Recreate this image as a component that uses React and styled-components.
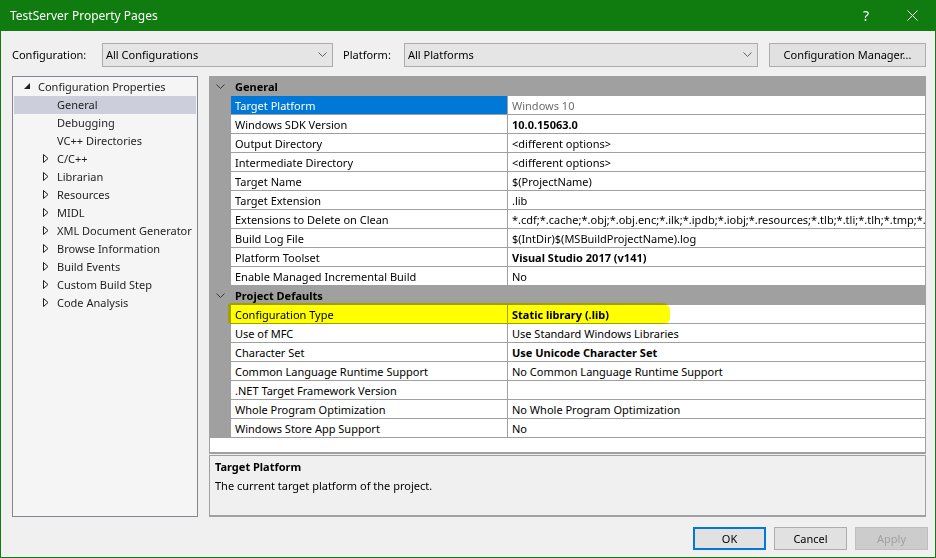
import React from "react";
import styled, { createGlobalStyle } from "styled-components";

const GlobalStyle = createGlobalStyle`
    html, body {
        margin: 0;
        padding: 0;
        background-color: #F0F0F0;
    }
    body {
        font-family: "Noto Sans", "Liberation Sans", sans-serif;
        font-size: 11px;
        color: #000;
    }
`;

const Window = styled.div`
    width: 936px;
    height: 558px;
    box-sizing: border-box;
    border: 1px solid #107C10;
    border-top: none;
    background-color: #F0F0F0;
    display: flex;
    flex-direction: column;
    overflow: hidden;
`;

const TitleBar = styled.div`
    height: 31px;
    flex: none;
    background-color: #107C10;
    color: #fff;
    display: flex;
    align-items: center;
    padding-left: 9px;
    font-size: 12px;
`;

const TitleText = styled.div`
    flex: 1;
`;

const TitleButton = styled.div`
    width: 46px;
    height: 31px;
    display: flex;
    align-items: center;
    justify-content: center;
    font-size: 14px;
`;

const Body = styled.div`
    flex: 1;
    display: flex;
    flex-direction: column;
    padding: 0 7px 0 11px;
`;

const Toolbar = styled.div`
    display: flex;
    align-items: center;
    height: 24px;
    margin-top: 12px;
    margin-right: 2px;
    line-height: 14px;
`;

const FieldLabel = styled.label`
    width: ${(p) => p.$width}px;
    flex: none;
    padding-bottom: 1px;
`;

const Combo = styled.div`
    width: ${(p) => p.$width}px;
    height: 24px;
    box-sizing: border-box;
    flex: none;
    background-color: #E5E5E5;
    border: 1px solid #ACACAC;
    display: flex;
    align-items: center;
    padding: 0 5px 1px 3px;
    margin-right: ${(p) => p.$gap || 0}px;
`;

const ComboText = styled.span`
    flex: 1;
`;

const Button = styled.button`
    width: ${(p) => p.$width || 73}px;
    height: ${(p) => p.$height || 23}px;
    box-sizing: border-box;
    font-family: inherit;
    font-size: 11px;
    padding: 0 0 1px;
    background-color: ${(p) => (p.$disabled ? "#CCCCCC" : "#E1E1E1")};
    color: ${(p) => (p.$disabled ? "#A0A0A0" : "#000")};
    border: ${(p) =>
        p.$default ? "2px solid #0078D7" : p.$disabled ? "1px solid #BFBFBF" : "1px solid #ADADAD"};
`;

const Main = styled.div`
    display: flex;
    gap: 11px;
    margin-top: 9px;
    margin-right: 2px;
    height: 441px;
`;

const Tree = styled.div`
    width: 186px;
    flex: none;
    box-sizing: border-box;
    border: 1px solid #828790;
    background-color: #F5F5F5;
    padding: 1px;
`;

const TreeRow = styled.div`
    height: 18px;
    display: flex;
    align-items: center;
    padding-left: ${(p) => p.$indent}px;
    padding-bottom: 1px;
    box-sizing: border-box;
    background-color: ${(p) => (p.$selected ? "#CCCEDB" : "transparent")};
    color: #1E1E1E;
    white-space: nowrap;
`;

const Expander = styled.span`
    width: 18px;
    flex: none;
    display: flex;
    align-items: center;
    padding-left: 4px;
    box-sizing: border-box;
`;

const RightColumn = styled.div`
    flex: 1;
    display: flex;
    flex-direction: column;
    gap: 1px;
    min-width: 0;
`;

const Grid = styled.div`
    height: 378px;
    box-sizing: border-box;
    border: 1px solid #A0A0A0;
    border-bottom-width: 2px;
    background-color: #FFFFFF;
    overflow: hidden;
`;

const GridRow = styled.div`
    position: relative;
    display: flex;
    height: 19px;
    background-color: #A0A0A0;
`;

const Gutter = styled.div`
    width: 21px;
    flex: none;
    display: flex;
    align-items: center;
    justify-content: center;
`;

const CategoryTitle = styled.div`
    flex: 1;
    font-weight: bold;
    padding-left: 4px;
    height: 18px;
    display: flex;
    align-items: center;
`;

const NameCell = styled.div`
    width: 276px;
    flex: none;
    height: 18px;
    box-sizing: border-box;
    display: flex;
    align-items: center;
    padding-left: 4px;
    background-color: ${(p) => (p.$selected ? "#0078D7" : "#FFFFFF")};
    color: ${(p) => (p.$selected ? "#FFFFFF" : "#000")};
    margin-right: 1px;
    white-space: nowrap;
`;

const ValueCell = styled.div`
    flex: 1;
    min-width: 0;
    height: 18px;
    display: flex;
    align-items: center;
    padding-left: 4px;
    background-color: #FFFFFF;
    font-weight: ${(p) => (p.$bold ? "bold" : "normal")};
    color: ${(p) => (p.$readonly ? "#6D6D6D" : "#000")};
    white-space: nowrap;
    overflow: hidden;
`;

/* marker stroke drawn over the "Configuration Type" row */
const Highlight = styled.div`
    position: absolute;
    left: 18px;
    top: -2px;
    width: 442px;
    height: 21px;
    background-color: #FFFF00;
    mix-blend-mode: multiply;
    border-radius: 3px 8px 6px 3px;
    pointer-events: none;
`;

const Description = styled.div`
    flex: 1;
    box-sizing: border-box;
    border: 1px solid #A0A0A0;
    border-bottom-width: 2px;
    padding: 1px 5px;
    line-height: 19px;
`;

const DescTitle = styled.div`
    font-weight: bold;
`;

const Footer = styled.div`
    display: flex;
    justify-content: flex-end;
    gap: 8px;
    margin-top: 10px;
`;

const Chevron = ({ color = "#606060" }) => (
    <svg width="9" height="6" viewBox="0 0 9 6">
        <polyline points="0.5,0.5 4.5,4.5 8.5,0.5" fill="none" stroke={color} strokeWidth="1" />
    </svg>
);

const OpenTriangle = () => (
    <svg width="7" height="7" viewBox="0 0 7 7">
        <polygon points="6,0 6,6 0,6" fill="#1E1E1E" />
    </svg>
);

const ClosedTriangle = () => (
    <svg width="6" height="9" viewBox="0 0 6 9">
        <polygon points="0.5,0.5 5,4.5 0.5,8.5" fill="none" stroke="#1E1E1E" strokeWidth="1" />
    </svg>
);

const treeItems = [
    { label: "Configuration Properties", indent: 6, open: true },
    { label: "General", indent: 25, leaf: true, selected: true },
    { label: "Debugging", indent: 25, leaf: true },
    { label: "VC++ Directories", indent: 25, leaf: true },
    { label: "C/C++", indent: 25 },
    { label: "Librarian", indent: 25 },
    { label: "Resources", indent: 25 },
    { label: "MIDL", indent: 25 },
    { label: "XML Document Generator", indent: 25 },
    { label: "Browse Information", indent: 25 },
    { label: "Build Events", indent: 25 },
    { label: "Custom Build Step", indent: 25 },
    { label: "Code Analysis", indent: 25 },
];

const categories = [
    {
        name: "General",
        rows: [
            { name: "Target Platform", value: "Windows 10", selected: true, readonly: true },
            { name: "Windows SDK Version", value: "10.0.15063.0", bold: true },
            { name: "Output Directory", value: "<different options>" },
            { name: "Intermediate Directory", value: "<different options>" },
            { name: "Target Name", value: "$(ProjectName)" },
            { name: "Target Extension", value: ".lib" },
            {
                name: "Extensions to Delete on Clean",
                value: "*.cdf;*.cache;*.obj;*.obj.enc;*.ilk;*.ipdb;*.iobj;*.resources;*.tlb;*.tli;*.tlh;*.tmp;*.rsp;*.pgc;*.pgd;*.meta",
            },
            { name: "Build Log File", value: "$(IntDir)$(MSBuildProjectName).log" },
            { name: "Platform Toolset", value: "Visual Studio 2017 (v141)", bold: true },
            { name: "Enable Managed Incremental Build", value: "No" },
        ],
    },
    {
        name: "Project Defaults",
        rows: [
            { name: "Configuration Type", value: "Static library (.lib)", bold: true, marked: true },
            { name: "Use of MFC", value: "Use Standard Windows Libraries" },
            { name: "Character Set", value: "Use Unicode Character Set", bold: true },
            { name: "Common Language Runtime Support", value: "No Common Language Runtime Support" },
            { name: ".NET Target Framework Version", value: "" },
            { name: "Whole Program Optimization", value: "No Whole Program Optimization" },
            { name: "Windows Store App Support", value: "No" },
        ],
    },
];

export default function App() {
    return (
        <>
            <GlobalStyle />
            <Window>
                <TitleBar>
                    <TitleText>TestServer Property Pages</TitleText>
                    <TitleButton>?</TitleButton>
                    <TitleButton>
                        <svg width="11" height="11" viewBox="0 0 11 11">
                            <path d="M0.5 0.5 L10.5 10.5 M10.5 0.5 L0.5 10.5" stroke="#fff" strokeWidth="1" />
                        </svg>
                    </TitleButton>
                </TitleBar>
                <Body>
                    <Toolbar>
                        <FieldLabel $width={90}>Configuration:</FieldLabel>
                        <Combo $width={231} $gap={10}>
                            <ComboText>All Configurations</ComboText>
                            <Chevron />
                        </Combo>
                        <FieldLabel $width={61}>Platform:</FieldLabel>
                        <Combo $width={354} $gap={11}>
                            <ComboText>All Platforms</ComboText>
                            <Chevron />
                        </Combo>
                        <Button $width={157} $height={24}>Configuration Manager...</Button>
                    </Toolbar>
                    <Main>
                        <Tree>
                            {treeItems.map((item) => (
                                <TreeRow key={item.label} $indent={item.indent} $selected={item.selected}>
                                    <Expander>
                                        {item.open ? <OpenTriangle /> : item.leaf ? null : <ClosedTriangle />}
                                    </Expander>
                                    {item.label}
                                </TreeRow>
                            ))}
                        </Tree>
                        <RightColumn>
                            <Grid>
                                {categories.map((cat) => (
                                    <React.Fragment key={cat.name}>
                                        <GridRow>
                                            <Gutter>
                                                <Chevron color="#3A3A3A" />
                                            </Gutter>
                                            <CategoryTitle>{cat.name}</CategoryTitle>
                                        </GridRow>
                                        {cat.rows.map((row) => (
                                            <GridRow key={row.name}>
                                                <Gutter />
                                                <NameCell $selected={row.selected}>{row.name}</NameCell>
                                                <ValueCell $bold={row.bold} $readonly={row.readonly}>
                                                    {row.value}
                                                </ValueCell>
                                                {row.marked && <Highlight />}
                                            </GridRow>
                                        ))}
                                    </React.Fragment>
                                ))}
                            </Grid>
                            <Description>
                                <DescTitle>Target Platform</DescTitle>
                                <div>The current target platform of the project.</div>
                            </Description>
                        </RightColumn>
                    </Main>
                    <Footer>
                        <Button $default>OK</Button>
                        <Button>Cancel</Button>
                        <Button $disabled>Apply</Button>
                    </Footer>
                </Body>
            </Window>
        </>
    );
}
